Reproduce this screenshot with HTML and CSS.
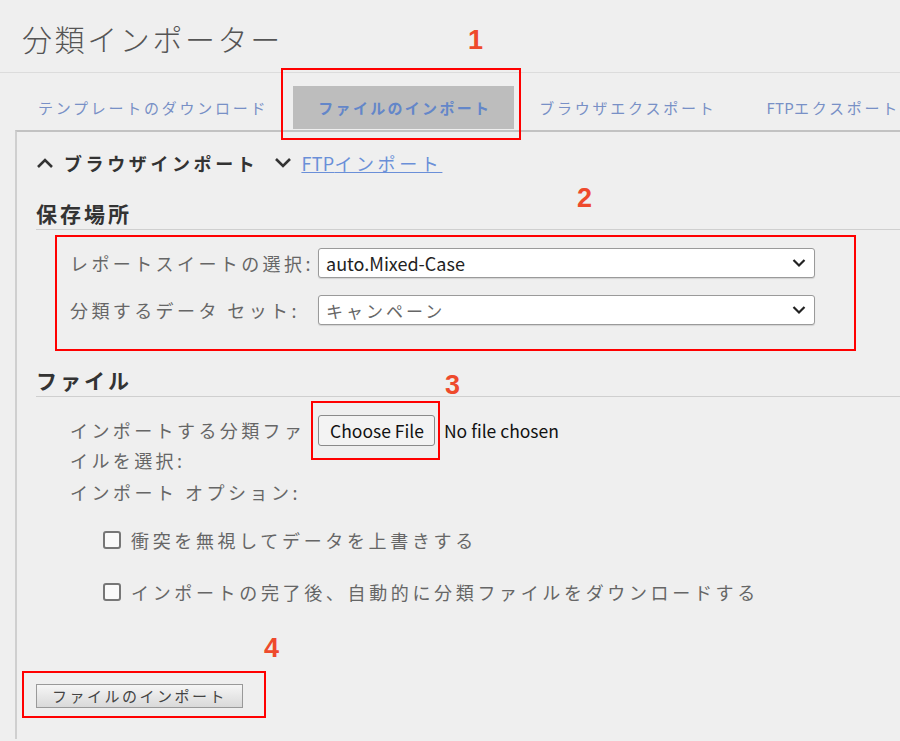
FILE: index.html
```html
<!DOCTYPE html>
<html lang="ja">
<head>
<meta charset="utf-8">
<title>分類インポーター</title>
<link rel="stylesheet" href="styles.css">
</head>
<body>
<header class="title">分類インポーター</header>
<nav class="tabs">
  <div class="tab">テンプレートのダウンロード</div>
  <div class="tab active">ファイルのインポート</div>
  <div class="tab">ブラウザエクスポート</div>
  <div class="tab"><span class="latin">FTP</span>エクスポート</div>
</nav>
<main class="panel">
  <div class="accordion">
    <svg class="chev" width="18" height="14" viewBox="0 0 18 14"><path d="M2 11 L9 4 L16 11" fill="none" stroke="#333" stroke-width="2.6"/></svg>
    <span class="acc-title">ブラウザインポート</span>
    <svg class="chev chev-down" width="18" height="14" viewBox="0 0 18 14"><path d="M2 3 L9 10 L16 3" fill="none" stroke="#333" stroke-width="2.6"/></svg>
    <a class="acc-link" href="#"><span class="latin">FTP</span>インポート</a>
  </div>

  <h2 class="section">保存場所</h2>
  <div class="row row-first">
    <label class="label">レポートスイートの選択:</label>
    <div class="select"><span class="val">auto.Mixed-Case</span><svg width="14" height="10" viewBox="0 0 14 10"><path d="M1.5 2 L7 7.5 L12.5 2" fill="none" stroke="#222" stroke-width="2.2"/></svg></div>
  </div>
  <div class="row row-second">
    <label class="label">分類するデータ セット:</label>
    <div class="select"><span class="val val-jp">キャンペーン</span><svg width="14" height="10" viewBox="0 0 14 10"><path d="M1.5 2 L7 7.5 L12.5 2" fill="none" stroke="#222" stroke-width="2.2"/></svg></div>
  </div>

  <h2 class="section section-file">ファイル</h2>
  <div class="row file-row">
    <label class="label label-wrap">インポートする分類ファイルを選択:</label>
    <div class="file-ctl"><span class="choose">Choose File</span><span class="nofile">No file chosen</span></div>
  </div>
  <div class="options-label">インポート オプション:</div>
  <div class="check check-first"><span class="box"></span><span>衝突を無視してデータを上書きする</span></div>
  <div class="check check-second"><span class="box"></span><span>インポートの完了後、自動的に分類ファイルをダウンロードする</span></div>

  <div class="submit">ファイルのインポート</div>
</main>

<div class="mark m1"></div>
<div class="mark m2"></div>
<div class="mark m3"></div>
<div class="mark m4"></div>
<div class="num n1">1</div>
<div class="num n2">2</div>
<div class="num n3">3</div>
<div class="num n4">4</div>
</body>
</html>
```
FILE: styles.css
```css
* { box-sizing: border-box; }
html, body { margin: 0; padding: 0; }
body {
  width: 900px;
  height: 741px;
  overflow: hidden;
  background: #efefef;
  font-family: "Noto Sans CJK JP", "Noto Sans", sans-serif;
  color: #555;
  position: relative;
}
.title {
  height: 73px;
  border-bottom: 1px solid #dcdcdc;
  padding: 16px 0 0 22px;
  font-size: 30px;
  line-height: 44px;
  letter-spacing: 2.6px;
  font-weight: 300;
  color: #555;
}
.tabs {
  display: flex;
  margin-top: 13px;
  padding-left: 13px;
  margin-bottom: 1px;
  overflow: hidden;
}
.tab {
  height: 43px;
  line-height: 43px;
  padding: 0 25px;
  font-size: 15px;
  letter-spacing: 2.75px;
  color: #7890c6;
  white-space: nowrap;
  flex: none;
}
.latin { letter-spacing: 0.3px; }
.tab.active {
  background: #bdbdbd;
  color: #6386c9;
  font-weight: 700;
  letter-spacing: 2.3px;
  padding: 0 23px 0 25px;
}
.panel {
  margin-left: 15px;
  border-left: 2px solid #cfcfcf;
  border-top: 2px solid #c2c2c2;
  padding-left: 19px;
  height: 609px;
}
.accordion {
  display: flex;
  align-items: center;
  margin-top: 16px;
  height: 30px;
}
.chev { margin-right: 10px; }
.chev-down { margin-left: 16px; margin-right: 9px; }
.acc-title {
  font-size: 18px;
  font-weight: 700;
  letter-spacing: 3.6px;
  color: #333;
}
.acc-link {
  font-size: 18px;
  letter-spacing: 3.6px;
  color: #6a8fd8;
  text-decoration: underline;
}
.section {
  margin: 19px 0 0 0;
  font-size: 21px;
  line-height: 32px;
  letter-spacing: 3px;
  font-weight: 700;
  color: #333;
  border-bottom: 1px solid #cfcfcf;
}
.row {
  display: flex;
  align-items: center;
  padding-left: 34px;
}
.row-first { margin-top: 18px; }
.row-second { margin-top: 17px; }
.label {
  width: 248px;
  flex: none;
  font-size: 18px;
  letter-spacing: 3.4px;
  color: #666;
  line-height: 30px;
  white-space: nowrap;
}
.select {
  width: 497px;
  height: 30px;
  background: #fff;
  border: 1px solid #9a9a9a;
  border-radius: 3px;
  box-shadow: 0 1px 1px rgba(0,0,0,0.12);
  display: flex;
  align-items: center;
  justify-content: space-between;
  padding: 0 8px 0 7px;
}
.val { font-size: 18px; color: #222; }
.val-jp { color: #666; letter-spacing: 3px; font-size: 17px; }
.section-file { margin-top: 39px; }
.file-row { margin-top: 18px; align-items: flex-start; }
.label-wrap { line-height: 30px; white-space: normal; }
.file-ctl { display: flex; align-items: center; }
.choose {
  height: 31px;
  line-height: 29px;
  padding: 0 10px 0 11px;
  border: 1px solid #8a8a8a;
  border-radius: 3px;
  background: #f3f3f3;
  font-size: 17.5px;
  color: #111;
}
.nofile { margin-left: 9px; font-size: 17.5px; color: #111; }
.options-label {
  padding-left: 34px;
  margin-top: 2px;
  font-size: 18px;
  letter-spacing: 3.5px;
  line-height: 30px;
  color: #666;
}
.check {
  display: flex;
  align-items: center;
  padding-left: 67px;
  font-size: 18px;
  letter-spacing: 3.65px;
  line-height: 30px;
  color: #666;
}
.check-first { margin-top: 18px; }
.check-second { margin-top: 22px; }
.box {
  width: 18px;
  height: 18px;
  border: 2px solid #777;
  border-radius: 3px;
  background: #fafafa;
  margin-right: 10px;
  flex: none;
}
.submit {
  margin-top: 77px;
  width: 207px;
  height: 24px;
  line-height: 22px;
  border: 1px solid #999;
  background: linear-gradient(#f6f6f6, #d9d9d9);
  text-align: center;
  font-size: 15px;
  letter-spacing: 2.5px;
  color: #444;
}
.mark {
  position: absolute;
  border: 2px solid #ff0000;
}
.m1 { left: 281px; top: 68px; width: 240px; height: 72px; }
.m2 { left: 55px; top: 235px; width: 801px; height: 116px; }
.m3 { left: 311px; top: 401px; width: 129px; height: 59px; }
.m4 { left: 22px; top: 671px; width: 244px; height: 47px; }
.num {
  position: absolute;
  font-family: "Liberation Sans", Arial, sans-serif;
  font-weight: 700;
  font-size: 27px;
  line-height: 30px;
  color: #ee4a2c;
}
.n1 { left: 468px; top: 25px; }
.n2 { left: 577px; top: 183px; }
.n3 { left: 445px; top: 370px; }
.n4 { left: 264px; top: 633px; }
```
